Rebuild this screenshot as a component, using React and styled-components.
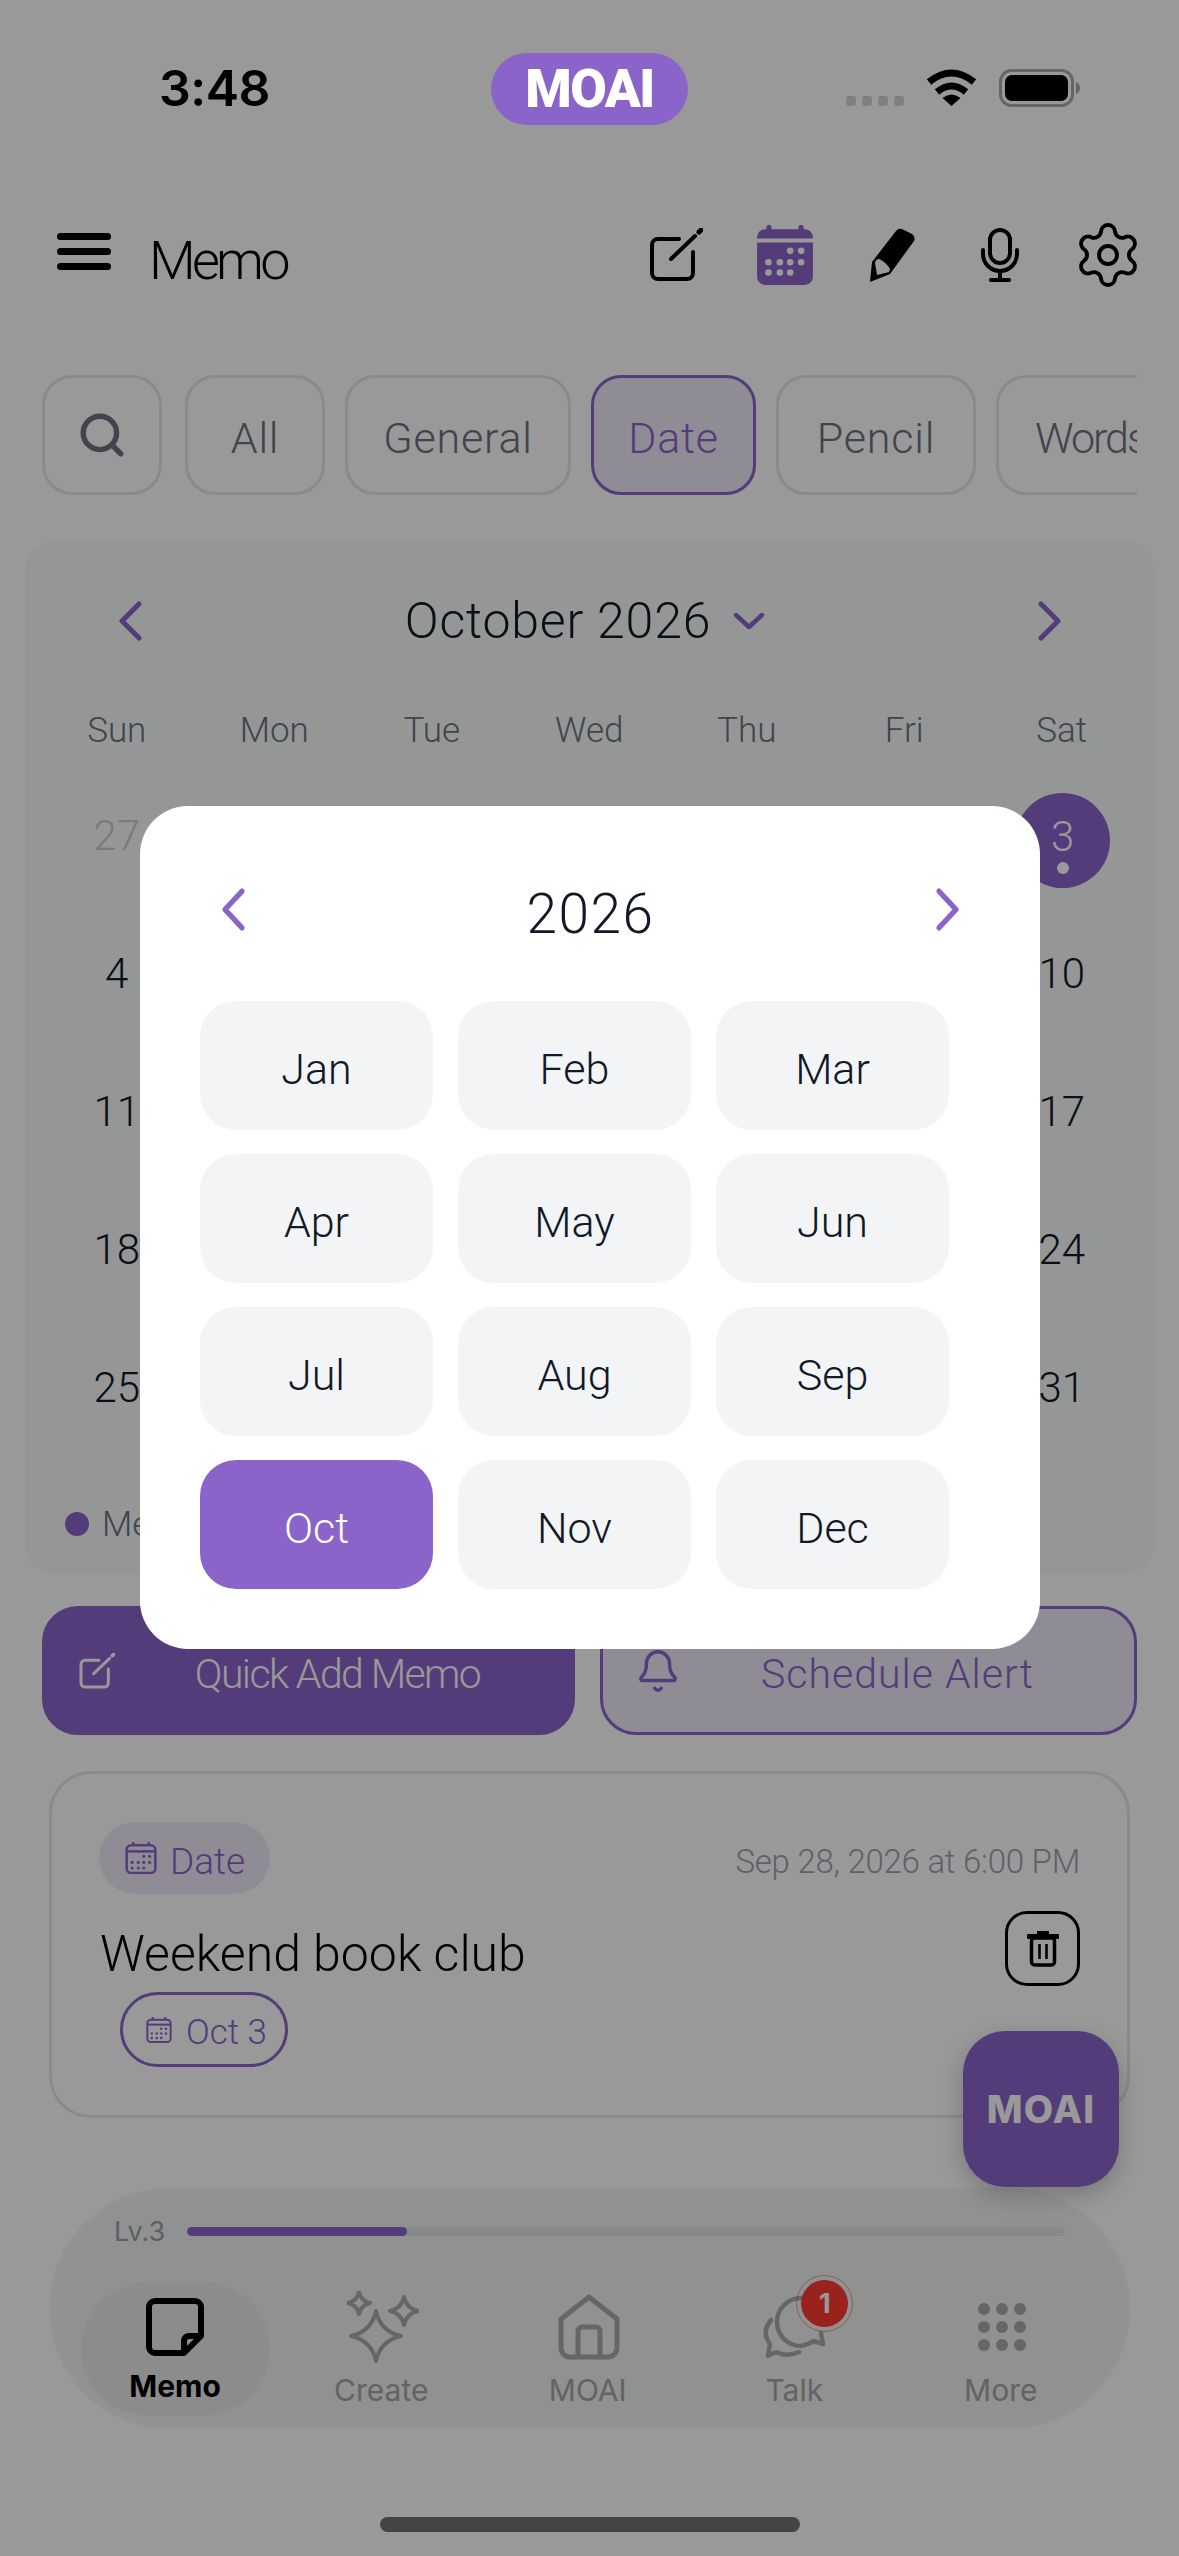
import React from "react";
import styled, { createGlobalStyle } from "styled-components";
import { Search, Settings, Bell } from "lucide-react";

const PURPLE = "#8b64ca";
const INK = "#111827";
const SANS = `Roboto, "Liberation Sans", sans-serif`;
const UI = `Inter, Roboto, sans-serif`;
const BODY_WEIGHT = 350;

const GlobalStyle = createGlobalStyle`
  html, body {
    margin: 0;
    padding: 0;
    background: #fff;
    font-family: ${SANS};
  }
  * { box-sizing: border-box; }
`;

const Page = styled.div`
  position: relative;
  width: 1179px;
  height: 2556px;
  overflow: hidden;
  background: #fff;
`;

/* Roboto sits a little high against the reference face */
const Lowered = styled.span`
  display: block;
  padding-top: ${(p) => p.$by || 6}px;
`;

/* status bar */
const StatusBar = styled.div`
  display: grid;
  grid-template-columns: 491px 197px 1fr;
  height: 225px;
  padding-top: 53px;
  align-items: start;
`;

const Time = styled.div`
  padding: 6px 0 0 159px;
  font-family: ${UI};
  font-size: 50px;
  line-height: 58px;
  font-weight: 600;
  letter-spacing: -0.5px;
  color: #000;
`;

const IslandPill = styled.div`
  position: relative;
  z-index: 30;
  height: 72px;
  border-radius: 36px;
  background: ${PURPLE};
  color: #fff;
  display: flex;
  align-items: center;
  justify-content: center;
  font-family: ${SANS};
  font-size: 53px;
  font-weight: 900;
  letter-spacing: -1.5px;
`;

const StatusIcons = styled.div`
  display: flex;
  align-items: flex-start;
  padding: 16px 0 0 158px;
`;

const SignalDots = styled.div`
  display: flex;
  gap: 6px;
  margin: 27px 22px 0 0;
`;

const SignalDot = styled.span`
  width: 10px;
  height: 10px;
  border-radius: 3px;
  background: #d5d5d5;
`;

const BatteryWrap = styled.div`
  margin-left: 22px;
`;

/* header */
const Header = styled.header`
  display: flex;
  align-items: center;
  height: 60px;
  padding: 0 41px 0 57px;
`;

const Burger = styled.div`
  display: flex;
  flex-direction: column;
  gap: 8px;
  width: 54px;
  margin-top: -8px;
`;

const BurgerBar = styled.span`
  height: 7px;
  border-radius: 4px;
  background: #000;
`;

const HeaderTitle = styled.h1`
  margin: 12px 0 0 38px;
  font-size: 54px;
  line-height: 60px;
  font-weight: ${BODY_WEIGHT};
  letter-spacing: -3.8px;
  color: #000;
  flex: 1;
`;

const HeaderIcons = styled.div`
  display: flex;
  gap: 48px;
`;

const IconSlot = styled.div`
  width: 60px;
  height: 60px;
  display: flex;
  align-items: center;
  justify-content: center;
  color: #000;
  svg { flex-shrink: 0; }
`;

/* filter tabs */
const TabsRow = styled.div`
  display: flex;
  gap: 20px;
  margin: 90px 42px 0;
  height: 120px;
  overflow: hidden;
`;

const Tab = styled.div`
  flex: 0 0 ${(p) => p.$w}px;
  height: 120px;
  margin-right: ${(p) => (p.$search ? 3 : 0)}px;
  display: flex;
  align-items: center;
  justify-content: ${(p) => (p.$clip ? "flex-start" : "center")};
  padding-left: ${(p) => (p.$clip ? 36 : 0)}px;
  border: 3px solid ${(p) => (p.$active ? PURPLE : "#e5e7eb")};
  border-radius: 30px;
  background: ${(p) => (p.$active ? "#f0eaf9" : "transparent")};
  color: ${(p) => (p.$active ? PURPLE : "#6b7280")};
  font-size: 43px;
  font-weight: ${BODY_WEIGHT};
  letter-spacing: ${(p) => (p.$clip ? -2 : 0.8)}px;
  white-space: nowrap;
`;

/* calendar card */
const CalendarCard = styled.section`
  margin: 45px 25px 0;
  height: 1034px;
  padding: 41px 13px 0;
  border-radius: 30px;
  background: #f9fafb;
`;

const MonthBar = styled.div`
  display: flex;
  align-items: center;
  justify-content: space-between;
  height: 80px;
  padding: 0 79px 0 80px;
`;

const MonthTitle = styled.div`
  display: flex;
  align-items: center;
  gap: 22px;
  margin-right: 10px;
  font-size: 50px;
  font-weight: ${BODY_WEIGHT};
  letter-spacing: 0.8px;
  color: ${INK};
`;

const WeekRow = styled.div`
  display: grid;
  grid-template-columns: repeat(7, 157.5px);
  height: 50px;
  margin-top: 44px;
  align-items: center;
  justify-items: center;
  font-size: 35px;
  font-weight: ${BODY_WEIGHT};
  color: #6b7280;
`;

const DaysGrid = styled.div`
  display: grid;
  grid-template-columns: repeat(7, 157.5px);
  grid-auto-rows: 138px;
  margin-top: 11px;
`;

const DayCell = styled.div`
  display: flex;
  align-items: center;
  justify-content: center;
  font-size: 42px;
  font-weight: ${BODY_WEIGHT};
  color: ${(p) => (p.$muted ? "#c9ccd2" : INK)};
`;

const SelectedDay = styled.div`
  width: 95px;
  height: 95px;
  margin: 11px 0 0 2px;
  padding-top: 21px;
  border-radius: 50%;
  background: ${PURPLE};
  color: #fff;
  display: flex;
  flex-direction: column;
  align-items: center;
  line-height: 46px;
`;

const EventDot = styled.span`
  width: 12px;
  height: 12px;
  border-radius: 50%;
  background: #fff;
  margin-top: 2px;
`;

const Legend = styled.div`
  display: flex;
  align-items: center;
  gap: 13px;
  height: 36px;
  margin: 50px 0 0 27px;
  font-size: 35px;
  font-weight: ${BODY_WEIGHT};
  color: #6b7280;
`;

const LegendDot = styled.span`
  width: 24px;
  height: 24px;
  border-radius: 50%;
  background: ${PURPLE};
`;

/* quick actions */
const Actions = styled.div`
  display: grid;
  grid-template-columns: 533px 537px;
  gap: 25px;
  margin: 32px 42px 0;
`;

const ActionButton = styled.div`
  height: 129px;
  display: flex;
  align-items: center;
  padding: 0 34px 0 ${(p) => (p.$solid ? 34 : 32)}px;
  border-radius: 36px;
  border: 3px solid ${PURPLE};
  background: ${(p) => (p.$solid ? PURPLE : "#f0eaf9")};
  color: ${(p) => (p.$solid ? "#fff" : PURPLE)};
  font-size: 41px;
  font-weight: ${BODY_WEIGHT};
`;

const ActionLabel = styled.span`
  flex: 1;
  margin-left: ${(p) => p.$gap}px;
  padding-top: 6px;
  text-align: center;
  letter-spacing: ${(p) => p.$tracking}px;
`;

/* memo card */
const MemoCard = styled.article`
  margin: 36px 49px 0;
  height: 347px;
  padding: 48px 47px 0 47px;
  border: 3px solid #e5e7eb;
  border-radius: 42px;
`;

const MemoTop = styled.div`
  display: flex;
  align-items: center;
  justify-content: space-between;
`;

const TypePill = styled.div`
  height: 72px;
  width: 171px;
  display: flex;
  align-items: center;
  gap: 13px;
  padding-left: 26px;
  border-radius: 36px;
  background: #f0eaf9;
  color: ${PURPLE};
  font-size: 37px;
  font-weight: ${BODY_WEIGHT};
`;

const Stamp = styled.span`
  padding-top: 6px;
  font-size: 33px;
  font-weight: ${BODY_WEIGHT};
  letter-spacing: -0.25px;
  color: #9ca3af;
`;

const MemoMiddle = styled.div`
  display: flex;
  align-items: center;
  justify-content: space-between;
  margin-top: 17px;
  height: 75px;
`;

const MemoTitle = styled.h2`
  margin: 10px 0 0 1px;
  font-size: 50px;
  font-weight: ${BODY_WEIGHT};
  color: #000;
`;

const TrashButton = styled.div`
  width: 75px;
  height: 75px;
  display: flex;
  align-items: center;
  justify-content: center;
  border: 3px solid #000;
  border-radius: 22px;
`;

const DateChip = styled.div`
  display: inline-flex;
  align-items: center;
  gap: 14px;
  width: 168px;
  height: 75px;
  margin: 6px 0 0 21px;
  padding-left: 23px;
  border: 3px solid ${PURPLE};
  border-radius: 38px;
  color: ${PURPLE};
  font-size: 35px;
  font-weight: ${BODY_WEIGHT};
`;

/* floating parts */
const Fab = styled.div`
  position: absolute;
  z-index: 3;
  left: 963px;
  top: 2031px;
  width: 156px;
  height: 156px;
  display: flex;
  align-items: center;
  justify-content: center;
  border-radius: 42px;
  background: ${PURPLE};
  color: #fff;
  font-family: ${UI};
  font-size: 38px;
  font-weight: 800;
  letter-spacing: 1.2px;
  box-shadow: 0 8px 24px rgba(0, 0, 0, 0.22);
`;

const TabBar = styled.nav`
  position: absolute;
  z-index: 2;
  left: 49px;
  top: 2188px;
  width: 1081px;
  height: 241px;
  padding: 31px 23px 0;
  border-radius: 120px;
  background: #f0f2f2;
  box-shadow: inset 0 0 26px rgba(255, 255, 255, 0.5);
`;

const LevelRow = styled.div`
  display: flex;
  align-items: center;
  gap: 22px;
  height: 24px;
  padding: 0 42px;
  font-family: ${UI};
  font-size: 27px;
  color: #9aa1ad;
`;

const LevelTrack = styled.div`
  flex: 1;
  height: 9px;
  border-radius: 5px;
  background: #e3e5e8;
  overflow: hidden;
`;

const LevelFill = styled.div`
  height: 100%;
  border-radius: 5px;
  background: ${PURPLE};
`;

const TabItems = styled.div`
  display: grid;
  grid-template-columns: 206px repeat(4, 206.5px);
  margin-top: 40px;
`;

const TabItem = styled.div`
  position: relative;
  height: 132px;
  display: flex;
  flex-direction: column;
  align-items: center;
  color: ${(p) => (p.$active ? "#000" : "#aaaaaa")};
`;

const ActiveBlob = styled.div`
  position: absolute;
  left: 9px;
  top: 0;
  width: 189px;
  height: 132px;
  border-radius: 66px;
  background: #e9eaeb;
`;

const TabIcon = styled.div`
  position: relative;
  height: 78px;
  margin: 5px 0 0 ${(p) => (p.$active ? 0 : 3)}px;
  display: flex;
  align-items: center;
  justify-content: center;
`;

const TabLabel = styled.span`
  position: relative;
  margin-top: ${(p) => (p.$active ? 2 : 6)}px;
  font-family: ${UI};
  font-size: 30px;
  line-height: 36px;
  font-weight: ${(p) => (p.$active ? 700 : 400)};
  color: ${(p) => (p.$active ? "#000" : "#a6a6a6")};
`;

const Badge = styled.span`
  position: absolute;
  right: -20px;
  top: -8px;
  width: 47px;
  height: 47px;
  display: flex;
  align-items: center;
  justify-content: center;
  border-radius: 50%;
  background: #ff3b30;
  outline: 1px solid rgba(255, 59, 48, 0.5);
  outline-offset: 4px;
  color: #fff;
  font-family: ${UI};
  font-size: 27px;
  font-weight: 700;
`;

const HomeBar = styled.div`
  position: absolute;
  z-index: 30;
  left: 380px;
  top: 2517px;
  width: 420px;
  height: 15px;
  border-radius: 8px;
  background: #444;
`;

/* month picker */
const Backdrop = styled.div`
  position: absolute;
  inset: 0;
  z-index: 10;
  padding-top: 806px;
  background: rgba(0, 0, 0, 0.4);
`;

const Modal = styled.div`
  width: 900px;
  height: 843px;
  margin-left: 140px;
  padding: 0 60px;
  border-radius: 48px;
  background: #fff;
`;

const YearBar = styled.div`
  display: flex;
  align-items: center;
  justify-content: space-between;
  height: 195px;
  padding: 12px 21px 0 21px;
  margin-right: -1px;
  font-size: 55px;
  font-weight: ${BODY_WEIGHT};
  letter-spacing: 1.5px;
  color: ${INK};
`;

const MonthGrid = styled.div`
  display: grid;
  grid-template-columns: repeat(3, 233px);
  grid-auto-rows: 129px;
  column-gap: 25px;
  row-gap: 24px;
`;

const MonthCell = styled.div`
  display: flex;
  align-items: center;
  justify-content: center;
  border-radius: 36px;
  background: ${(p) => (p.$active ? PURPLE : "#f3f4f6")};
  color: ${(p) => (p.$active ? "#fff" : INK)};
  font-size: 43px;
  font-weight: ${BODY_WEIGHT};
`;

/* drawings */
const Chevron = ({ dir = "left", w = 24, h = 40, sw = 5 }) => (
  <svg width={w} height={h} viewBox="0 0 24 40" preserveAspectRatio="none" fill="none" stroke={PURPLE} strokeWidth={sw} strokeLinecap="round" strokeLinejoin="round">
    <path d={dir === "left" ? "M21 3 L4 20 L21 37" : "M3 3 L20 20 L3 37"} />
  </svg>
);

const ComposeIcon = ({ size = 54, sw = 4 }) => (
  <svg width={size} height={size} viewBox="0 0 54 54" fill="none" stroke="currentColor" strokeWidth={sw} strokeLinecap="round">
    <path d="M30 11H9a6 6 0 0 0-6 6v28a6 6 0 0 0 6 6h29a6 6 0 0 0 6-6V24" />
    <path d="M22 31 L46 8" />
    <path d="M50 4 L52 2" strokeWidth={sw + 1} />
  </svg>
);

const calendarDots = [
  [34, 25], [44.6, 25],
  [13, 36], [24, 36], [34, 36], [44.6, 36],
  [13, 46], [24, 46], [34, 46],
];

const CalendarSolid = () => (
  <svg width="60" height="60" viewBox="0 0 58 58" style={{ marginLeft: 2 }}>
    <path d="M10 4h38a8 8 0 0 1 8 8v1H2v-1a8 8 0 0 1 8-8z" fill={PURPLE} />
    <rect x="11" y="0" width="5" height="6" rx="2" fill={PURPLE} />
    <rect x="42" y="0" width="5" height="6" rx="2" fill={PURPLE} />
    <path d="M2 17h54v33a8 8 0 0 1-8 8H10a8 8 0 0 1-8-8z" fill={PURPLE} />
    {calendarDots.map(([x, y]) => (
      <circle key={`${x}-${y}`} cx={x} cy={y} r="3.2" fill="#fff" />
    ))}
  </svg>
);

const CalendarOutline = ({ size = 32 }) => (
  <svg width={size} height={size} viewBox="0 0 58 58" fill="none" stroke="currentColor" strokeWidth="4.5">
    <rect x="3" y="6" width="52" height="50" rx="8" />
    <path d="M3 17H55" />
    <path d="M15 0V6M43 0V6" />
    {calendarDots.map(([x, y]) => (
      <circle key={`${x}-${y}`} cx={x} cy={y + 1} r="2.8" fill="currentColor" stroke="none" />
    ))}
  </svg>
);

const PencilIcon = () => (
  <svg width="45" height="54" viewBox="0 0 45 54">
    <path d="M0 54 L2 34 L26 3 Q28 0 32 1 L42 6 Q46 9 44 13 L20 46 Z" fill="#000" />
    <path d="M5 35 Q6 31 9 31 Q16 34 20 41 L19 44 L7 47 Z" fill="#fff" />
  </svg>
);

const MicIcon = () => (
  <svg width="38" height="54" viewBox="0 0 38 54" fill="none" stroke="#000" strokeWidth="4" strokeLinecap="round">
    <rect x="9" y="2" width="20" height="33" rx="10" />
    <path d="M2 22v4a17 17 0 0 0 34 0v-4" />
    <path d="M19 43V52M10 52H28" />
  </svg>
);

const WifiIcon = () => (
  <svg width="51" height="38" viewBox="0 0 51 38" fill="none" stroke="#000" strokeWidth="7">
    <path d="M3 13 Q25.5 -5 48 13" />
    <path d="M11 23 Q25.5 11 40 23" />
    <path d="M25.5 37 L16.5 29 Q25.5 22 34.5 29 Z" fill="#000" stroke="none" />
  </svg>
);

const BatteryIcon = () => (
  <svg width="82" height="38" viewBox="0 0 82 38">
    <rect x="1.5" y="1.5" width="72" height="35" rx="11" fill="none" stroke="#aaa" strokeWidth="3" />
    <rect x="6" y="6" width="63" height="26" rx="7" fill="#000" />
    <path d="M77 13 Q81 15 81 19 Q81 23 77 25 Z" fill="#aaa" />
  </svg>
);

const TrashIcon = () => (
  <svg width="32" height="36" viewBox="0 0 32 36" fill="none" stroke="#000">
    <rect x="10" y="0" width="12" height="4" fill="#000" stroke="none" />
    <rect x="0" y="3" width="32" height="5" rx="1" fill="#000" stroke="none" />
    <rect x="4.5" y="7" width="23" height="27" rx="3" strokeWidth="3.5" />
    <path d="M12.5 13V28M19.5 13V28" strokeWidth="2.6" />
  </svg>
);

const NoteIcon = () => (
  <svg width="58" height="58" viewBox="0 0 58 58" fill="none" stroke="#000" strokeWidth="6" strokeLinejoin="round">
    <path d="M9 3H49a6 6 0 0 1 6 6V38L38 55H9a6 6 0 0 1-6-6V9a6 6 0 0 1 6-6Z" />
    <path d="M55 38H43a5 5 0 0 0-5 5V55" />
  </svg>
);

const star = (cx, cy, r) => {
  const k = r * 0.18;
  return `M${cx} ${cy - r}Q${cx + k} ${cy - k} ${cx + r} ${cy}Q${cx + k} ${cy + k} ${cx} ${cy + r}Q${cx - k} ${cy + k} ${cx - r} ${cy}Q${cx - k} ${cy - k} ${cx} ${cy - r}Z`;
};

const SparkIcon = () => (
  <svg width="72" height="72" viewBox="0 0 72 72" fill="none" stroke="currentColor" strokeWidth="4" strokeLinejoin="round">
    <path d={star(29, 45, 25)} />
    <path d={star(12, 12, 11)} />
    <path d={star(57, 20, 14)} />
  </svg>
);

const HouseIcon = () => (
  <svg width="62" height="66" viewBox="0 0 62 66" fill="none" stroke="currentColor" strokeWidth="5" strokeLinejoin="round">
    <path d="M31 3 L59 25 V54 a9 9 0 0 1-9 9 H12 a9 9 0 0 1-9-9 V25 Z" />
    <path d="M20 63 V37 a4 4 0 0 1 4-4 h14 a4 4 0 0 1 4 4 V63" />
  </svg>
);

const TalkIcon = () => (
  <svg width="65" height="66" viewBox="0 0 65 66" fill="none" stroke="currentColor" strokeWidth="4.5" strokeLinecap="round" strokeLinejoin="round">
    <path d="M38 4A24 24 0 0 0 38 52Q46 50 51 47L60 50L58 39" />
    <path d="M8 26Q-2 38 7 50L5 62Q14 56 18 60Q28 62 36 58" />
  </svg>
);

const GridIcon = () => (
  <svg width="48" height="48" viewBox="0 0 48 48" fill="currentColor">
    {[6, 24, 42].map((y) =>
      [6, 24, 42].map((x) => <circle key={`${x}-${y}`} cx={x} cy={y} r="6" />)
    )}
  </svg>
);

const tabs = [
  { label: "All", w: 140 },
  { label: "General", w: 226 },
  { label: "Date", w: 165, active: true },
  { label: "Pencil", w: 200 },
  { label: "Words", w: 180, clip: true },
];

const weekdays = ["Sun", "Mon", "Tue", "Wed", "Thu", "Fri", "Sat"];
const months = ["Jan", "Feb", "Mar", "Apr", "May", "Jun", "Jul", "Aug", "Sep", "Oct", "Nov", "Dec"];
const days = [
  { n: 27, muted: true }, { n: 28, muted: true }, { n: 29, muted: true }, { n: 30, muted: true },
  ...Array.from({ length: 31 }, (_, i) => ({ n: i + 1 })),
];

const App = () => (
  <Page>
    <GlobalStyle />
    <StatusBar>
      <Time>3:48</Time>
      <IslandPill>MOAI</IslandPill>
      <StatusIcons>
        <SignalDots>
          <SignalDot />
          <SignalDot />
          <SignalDot />
          <SignalDot />
        </SignalDots>
        <WifiIcon />
        <BatteryWrap>
          <BatteryIcon />
        </BatteryWrap>
      </StatusIcons>
    </StatusBar>

    <Header>
      <Burger>
        <BurgerBar />
        <BurgerBar />
        <BurgerBar />
      </Burger>
      <HeaderTitle>Memo</HeaderTitle>
      <HeaderIcons>
        <IconSlot><ComposeIcon /></IconSlot>
        <IconSlot><CalendarSolid /></IconSlot>
        <IconSlot><PencilIcon /></IconSlot>
        <IconSlot><MicIcon /></IconSlot>
        <IconSlot><Settings size={72} strokeWidth={1.3} /></IconSlot>
      </HeaderIcons>
    </Header>

    <TabsRow>
      <Tab $w={120} $search>
        <Search size={50} strokeWidth={2.6} />
      </Tab>
      {tabs.map((t) => (
        <Tab key={t.label} $w={t.w} $active={t.active} $clip={t.clip}>
          <Lowered>{t.label}</Lowered>
        </Tab>
      ))}
    </TabsRow>

    <CalendarCard>
      <MonthBar>
        <Chevron />
        <MonthTitle>
          October 2026
          <svg width="32" height="16" viewBox="0 0 32 16" fill="none" stroke={PURPLE} strokeWidth="4.5" strokeLinecap="round" strokeLinejoin="round">
            <path d="M3 2 L16 14 L29 2" />
          </svg>
        </MonthTitle>
        <Chevron dir="right" />
      </MonthBar>
      <WeekRow>
        {weekdays.map((d) => (
          <span key={d}>{d}</span>
        ))}
      </WeekRow>
      <DaysGrid>
        {days.map((d) => (
          <DayCell key={`${d.n}-${d.muted ? "m" : "c"}`} $muted={d.muted}>
            {!d.muted && d.n === 3 ? (
              <SelectedDay>
                3
                <EventDot />
              </SelectedDay>
            ) : (
              d.n
            )}
          </DayCell>
        ))}
      </DaysGrid>
      <Legend>
        <LegendDot />
        Memo
      </Legend>
    </CalendarCard>

    <Actions>
      <ActionButton $solid>
        <ComposeIcon size={36} sw={4.5} />
        <ActionLabel $gap={22} $tracking={-1.6}>Quick Add Memo</ActionLabel>
      </ActionButton>
      <ActionButton>
        <Bell size={46} strokeWidth={1.8} />
        <ActionLabel $gap={14} $tracking={1}>Schedule Alert</ActionLabel>
      </ActionButton>
    </Actions>

    <MemoCard>
      <MemoTop>
        <TypePill>
          <CalendarOutline />
          <Lowered>Date</Lowered>
        </TypePill>
        <Stamp>Sep 28, 2026 at 6:00 PM</Stamp>
      </MemoTop>
      <MemoMiddle>
        <MemoTitle>Weekend book club</MemoTitle>
        <TrashButton>
          <TrashIcon />
        </TrashButton>
      </MemoMiddle>
      <DateChip>
        <CalendarOutline size={26} />
        <Lowered>Oct 3</Lowered>
      </DateChip>
    </MemoCard>

    <Fab>MOAI</Fab>

    <TabBar>
      <LevelRow>
        Lv.3
        <LevelTrack>
          <LevelFill style={{ width: "25%" }} />
        </LevelTrack>
      </LevelRow>
      <TabItems>
        <TabItem $active>
          <ActiveBlob />
          <TabIcon $active><NoteIcon /></TabIcon>
          <TabLabel $active>Memo</TabLabel>
        </TabItem>
        <TabItem>
          <TabIcon><SparkIcon /></TabIcon>
          <TabLabel>Create</TabLabel>
        </TabItem>
        <TabItem>
          <TabIcon><HouseIcon /></TabIcon>
          <TabLabel>MOAI</TabLabel>
        </TabItem>
        <TabItem>
          <TabIcon>
            <TalkIcon />
            <Badge>1</Badge>
          </TabIcon>
          <TabLabel>Talk</TabLabel>
        </TabItem>
        <TabItem>
          <TabIcon><GridIcon /></TabIcon>
          <TabLabel>More</TabLabel>
        </TabItem>
      </TabItems>
    </TabBar>

    <Backdrop>
      <Modal>
        <YearBar>
          <Chevron w={24} h={43} />
          <Lowered $by={8}>2026</Lowered>
          <Chevron dir="right" w={24} h={43} />
        </YearBar>
        <MonthGrid>
          {months.map((m) => (
            <MonthCell key={m} $active={m === "Oct"}>
              <Lowered>{m}</Lowered>
            </MonthCell>
          ))}
        </MonthGrid>
      </Modal>
    </Backdrop>
    <HomeBar />
  </Page>
);

export default App;
